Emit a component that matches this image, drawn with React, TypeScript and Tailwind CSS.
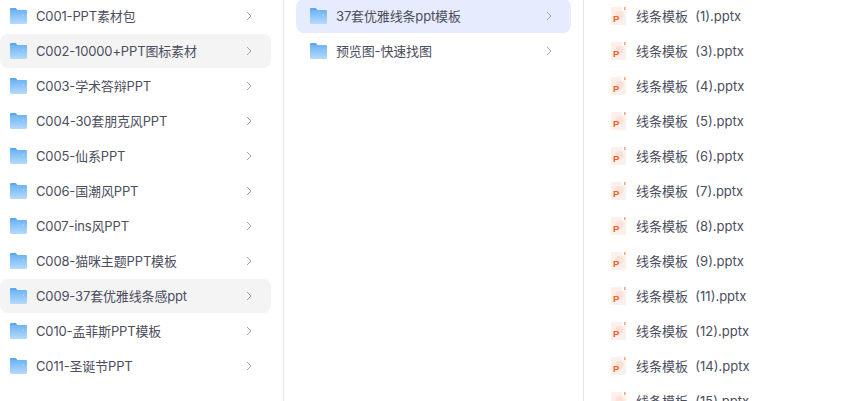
const FONT = 'font-["Inter","Noto_Sans_CJK_SC",sans-serif]';

function Folder() {
  return (
    <svg width="17" height="16" viewBox="0 0 17 16" className="shrink-0">
      <defs>
        <linearGradient id="fg" x1="0" y1="0" x2="0" y2="1">
          <stop offset="0" stopColor="#6db4f4" />
          <stop offset="1" stopColor="#b5dafc" />
        </linearGradient>
      </defs>
      <path d="M0 1.2C0 .5.5 0 1.2 0h4.6l1.6 2H0z" fill="#5aa8f0" />
      <path d="M0 2h15.8c.7 0 1.2.5 1.2 1.2v11.6c0 .7-.5 1.2-1.2 1.2H1.2C.5 16 0 15.500 0 14.800z" fill="url(#fg)" />
      <rect x="12.500" y="6.500" width="1.500" height="1.500" fill="#a5d2fa" />
    </svg>
  );
}

function Chevron() {
  return (
    <svg width="6" height="10" viewBox="0 0 6 10" fill="none" className="shrink-0">
      <path d="M1 1l4 4-4 4" stroke="#a3a6ad" strokeWidth="1" />
    </svg>
  );
}

function PptIcon() {
  return (
    <svg width="15" height="18" viewBox="0 0 15 18" className="shrink-0">
      <path d="M0 1.500C0 .7.7 0 1.500 0H11v3.500h4v13c0 .8-.7 1.500-1.500 1.500h-12C.7 18 0 17.300 0 16.500z" fill="#fdf0ea" />
      <circle cx="8.500" cy="8" r="4" fill="#fbe2d8" />
      <rect x="13" y="0" width="1.500" height="3" fill="#f9a27c" />
      <text x="2" y="14.500" fontSize="9.500" fontWeight="800" fill="#f4601f" fontFamily="Liberation Sans">P</text>
    </svg>
  );
}

function FolderRow({ label, active, selected }: { label: string; active?: boolean; selected?: boolean }) {
  return (
    <div className={`flex h-[34px] items-center rounded-lg pl-[10px] pr-[19px] ${active ? "bg-[#f4f4f5]" : ""} ${selected ? "bg-[#e6ebfd] pl-[14px] pr-[19px]" : ""}`}>
      <Folder />
      <span className="ml-[9px] flex-1 truncate text-[13px] leading-[20px] tracking-[-0.15px] text-[#4b4e5c]">{label}</span>
      <Chevron />
    </div>
  );
}

const col1 = [
  "C001-PPT素材包",
  "C002-10000+PPT图标素材",
  "C003-学术答辩PPT",
  "C004-30套朋克风PPT",
  "C005-仙系PPT",
  "C006-国潮风PPT",
  "C007-ins风PPT",
  "C008-猫咪主题PPT模板",
  "C009-37套优雅线条感ppt",
  "C010-孟菲斯PPT模板",
  "C011-圣诞节PPT",
];

const files = ["1", "3", "4", "5", "6", "7", "8", "9", "11", "12", "14", "15"];

export default function App() {
  return (
    <div className={`flex h-[401px] w-[864px] overflow-hidden bg-white ${FONT}`}>
      <div className="h-full w-[284px] shrink-0 border-r border-[#e8e8ea] pr-3">
        <div className="-mt-px flex flex-col gap-px">
          {col1.map((l, i) => (
            <FolderRow key={l} label={l} active={i === 1 || i === 8} />
          ))}
        </div>
      </div>
      <div className="h-full w-[300px] shrink-0 border-r border-[#e8e8ea] pl-3 pr-3">
        <div className="-mt-px flex flex-col gap-px">
          <FolderRow label="37套优雅线条ppt模板" selected />
          <div className="pl-[4px]">
            <FolderRow label="预览图-快速找图" />
          </div>
        </div>
      </div>
      <div className="flex-1 pl-[27px]">
        <div className="-mt-px flex flex-col gap-px">
          {files.map((n) => (
            <div key={n} className="flex h-[34px] shrink-0 items-center">
              <PptIcon />
              <span className="ml-[10px] whitespace-pre text-[13px] leading-[20px] text-[#4b4e5c]">线条模板  ({n}).pptx</span>
            </div>
          ))}
        </div>
      </div>
    </div>
  );
}
